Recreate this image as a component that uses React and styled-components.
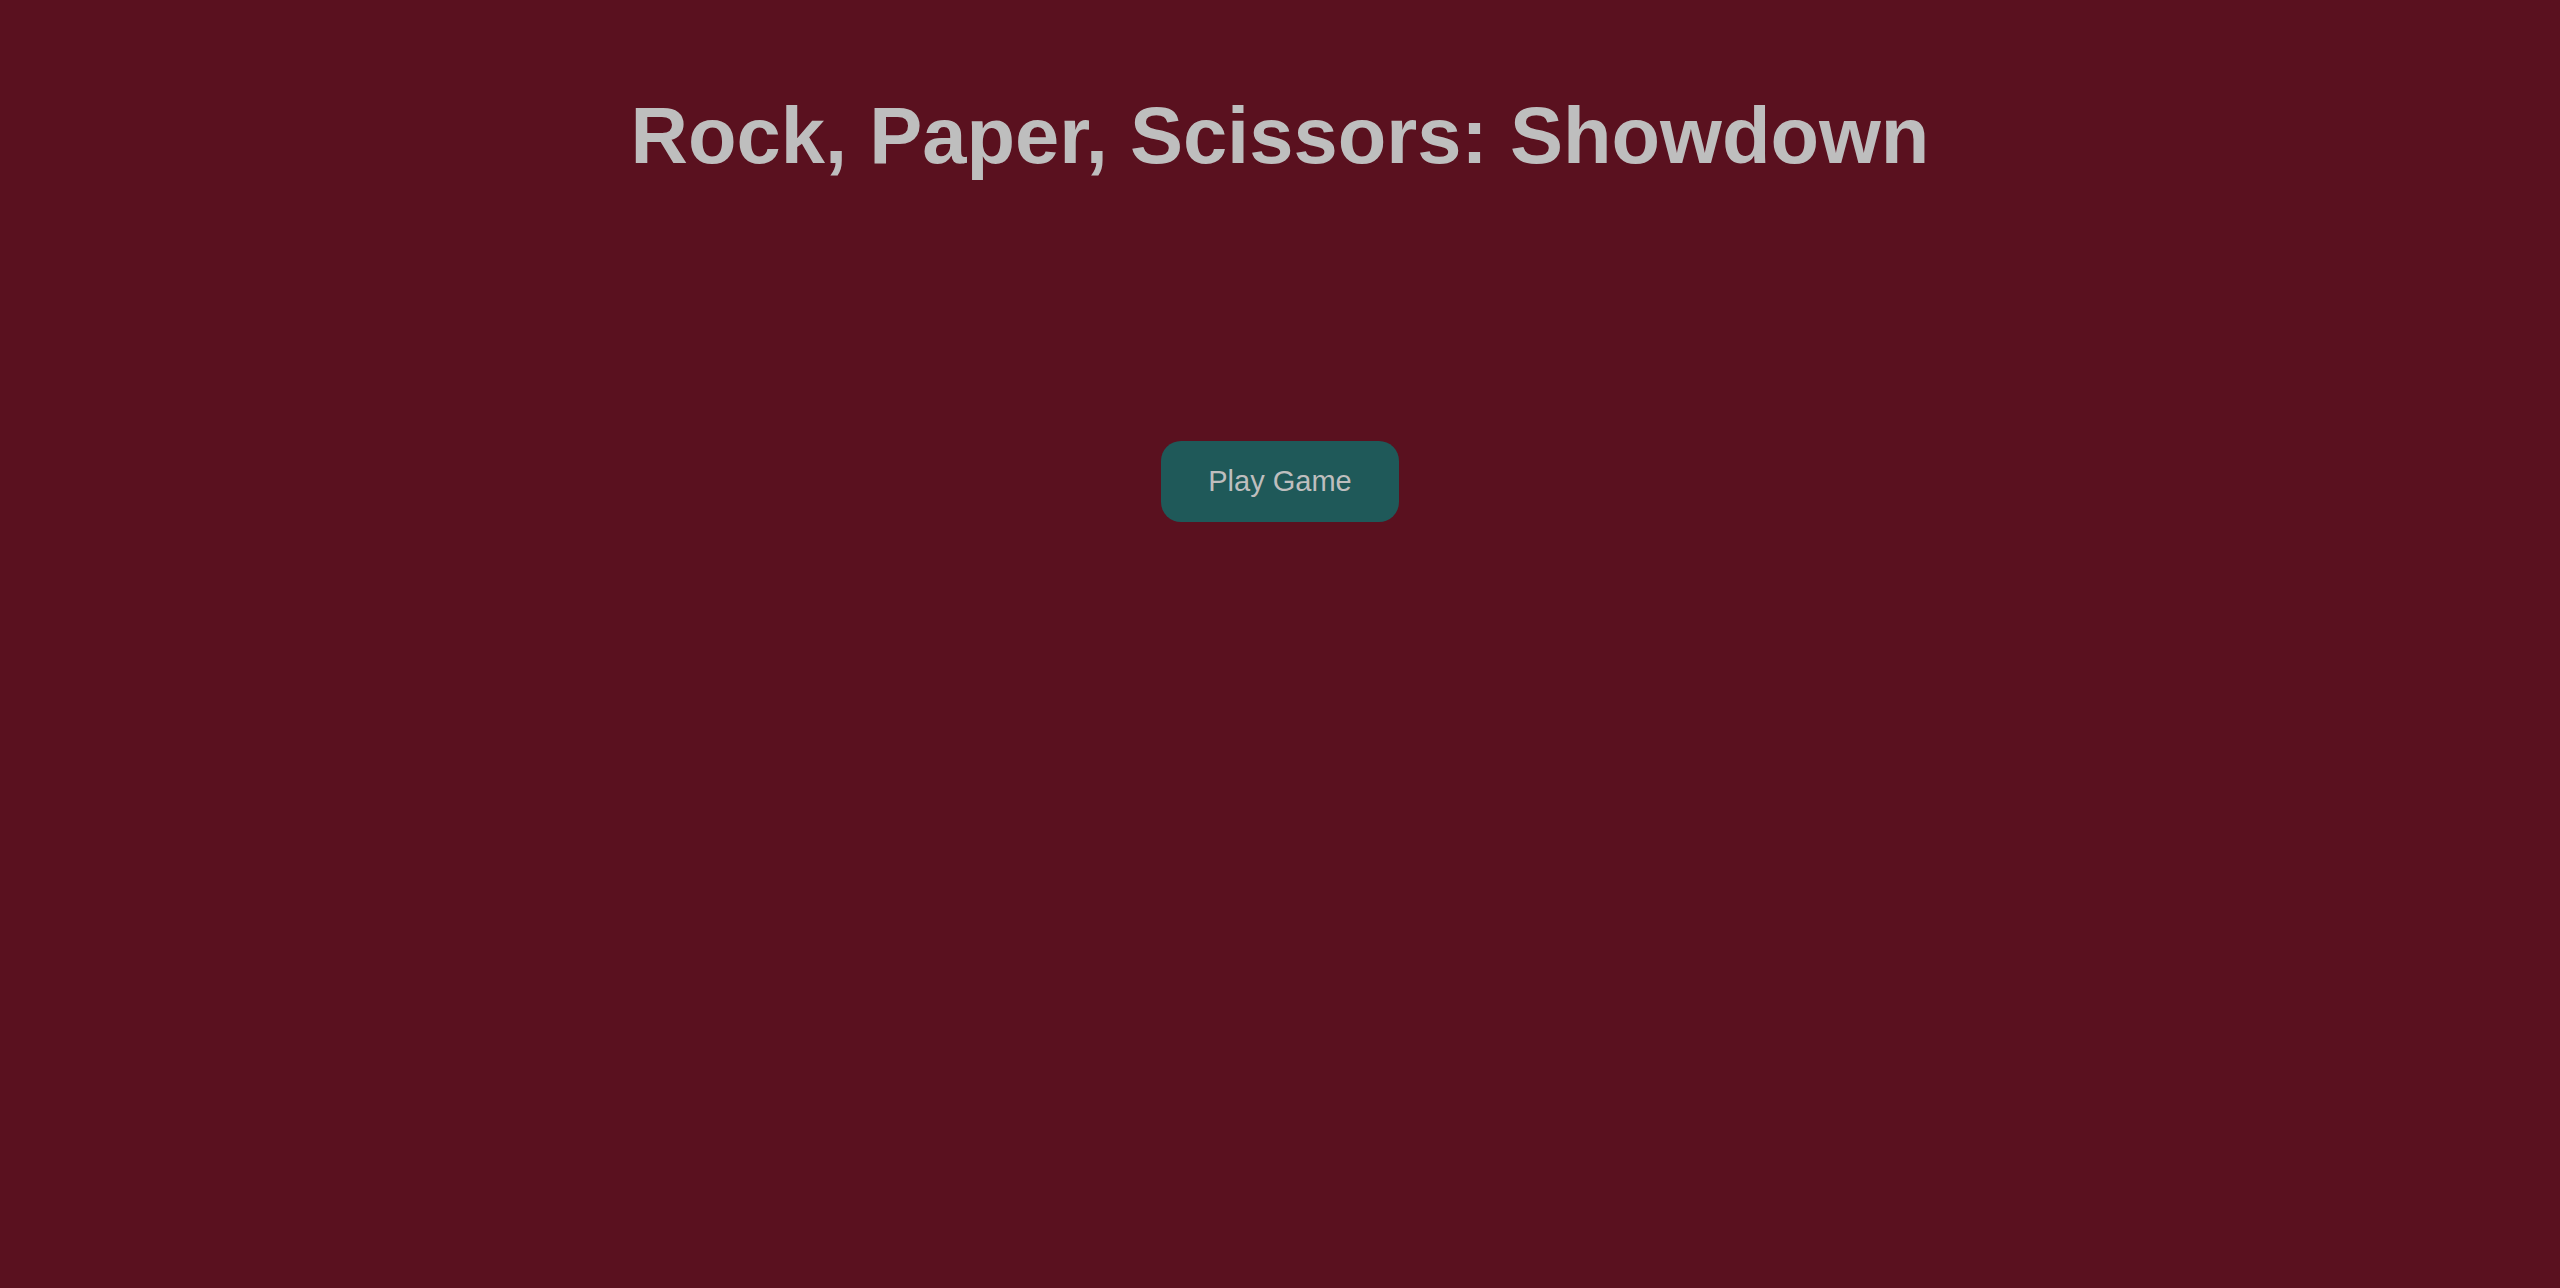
import React from 'react';
import styled, { createGlobalStyle } from 'styled-components';

const GlobalStyle = createGlobalStyle`
  html, body {
    margin: 0;
    padding: 0;
    background: #5a111f;
  }
  body {
    font-family: 'Liberation Sans', Arial, sans-serif;
  }
`;

const Page = styled.main`
  min-height: 100vh;
  display: flex;
  flex-direction: column;
  align-items: center;
  padding-top: 90px;
  box-sizing: border-box;
  background: #5a111f;
`;

const Title = styled.h1`
  margin: 0;
  font-size: 79.5px;
  font-weight: 700;
  line-height: normal;
  color: #bebebe;
`;

const PlayButton = styled.button`
  margin-top: 259px;
  padding: 24px 47px;
  border: none;
  border-radius: 20px;
  background: #1f5959;
  color: #bebebe;
  font-family: 'Liberation Sans', Arial, sans-serif;
  font-size: 29px;
  line-height: normal;
  cursor: pointer;
`;

const App = () => (
  <>
    <GlobalStyle />
    <Page>
      <Title>Rock, Paper, Scissors: Showdown</Title>
      <PlayButton type="button">Play Game</PlayButton>
    </Page>
  </>
);

export default App;
